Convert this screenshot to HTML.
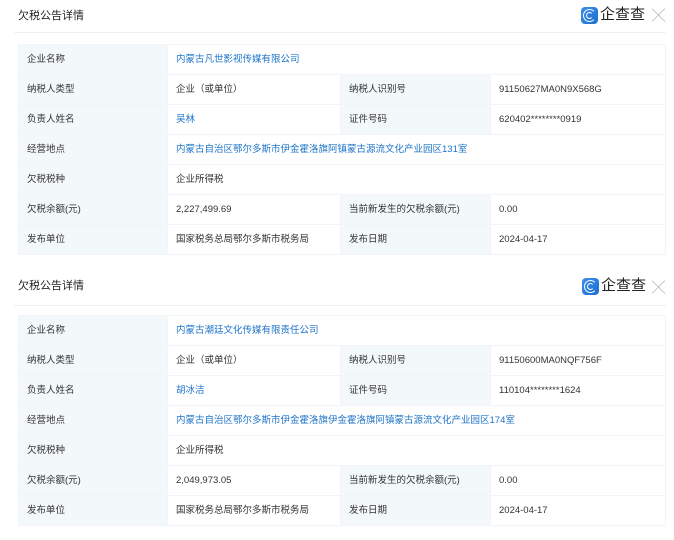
<!DOCTYPE html>
<html><head><meta charset="utf-8"><style>
*{margin:0;padding:0;box-sizing:border-box}
body{width:674px;height:540px;background:#fff;font-family:"Liberation Sans","Noto Sans CJK SC",sans-serif;color:#333;font-size:9.5px;position:relative;overflow:hidden}
.title{position:absolute;left:18px;font-size:11px;color:#222;line-height:14px}
.logo{position:absolute;display:flex;align-items:center}
.ic{width:17px;height:17px;border-radius:4px;background:linear-gradient(135deg,#3a8ee8,#1e6fd0);position:relative;margin-right:2px}
.ic:before{content:"";position:absolute;left:2px;top:2px;width:13px;height:13px;box-sizing:border-box;border:1.5px solid #fff;border-radius:50%;border-right-color:transparent}
.ic:after{content:"";position:absolute;left:5px;top:5px;width:7px;height:7px;box-sizing:border-box;border:1.5px solid #fff;border-radius:50%;border-right-color:transparent}
.lt{font-size:15px;color:#222;line-height:18px}
.x{position:absolute;width:14px;height:14px}
.x:before,.x:after{content:"";position:absolute;left:6px;top:-2px;width:1.2px;height:18px;background:#c4c4c4;transform:rotate(45deg)}
.x:after{transform:rotate(-45deg)}
.line{position:absolute;left:14px;width:652px;height:1px;background:#eef0f2}
table{position:absolute;left:18px;width:647px;border-collapse:collapse;table-layout:fixed}
td{height:30px;line-height:28px;border:1px solid #f3f4f6;padding:1px 8px 0;white-space:nowrap;overflow:hidden;vertical-align:middle}
tr{height:30px}
td.l{background:#f3f8fb;color:#333}
a{color:#1f75c8;text-decoration:none}
</style></head><body>
<div class="title" style="top:9px">欠税公告详情</div>
<div class="logo" style="left:581px;top:6px"><div class="ic"></div><span class="lt">企查查</span></div>
<div class="x" style="left:652px;top:8px"></div>
<div class="line" style="top:32px"></div>
<table style="top:44px">
<colgroup><col style="width:149px"><col style="width:173px"><col style="width:150px"><col style="width:175px"></colgroup>
<tr><td class="l">企业名称</td><td colspan="3"><a>内蒙古凡世影视传媒有限公司</a></td></tr>
<tr><td class="l">纳税人类型</td><td>企业（或单位）</td><td class="l">纳税人识别号</td><td>91150627MA0N9X568G</td></tr>
<tr><td class="l">负责人姓名</td><td><a>吴林</a></td><td class="l">证件号码</td><td>620402********0919</td></tr>
<tr><td class="l">经营地点</td><td colspan="3"><a>内蒙古自治区鄂尔多斯市伊金霍洛旗阿镇蒙古源流文化产业园区131室</a></td></tr>
<tr><td class="l">欠税税种</td><td colspan="3">企业所得税</td></tr>
<tr><td class="l">欠税余额(元)</td><td>2,227,499.69</td><td class="l">当前新发生的欠税余额(元)</td><td>0.00</td></tr>
<tr><td class="l">发布单位</td><td>国家税务总局鄂尔多斯市税务局</td><td class="l">发布日期</td><td>2024-04-17</td></tr>
</table>
<div class="title" style="top:279px">欠税公告详情</div>
<div class="logo" style="left:582px;top:277px"><div class="ic"></div><span class="lt">企查查</span></div>
<div class="x" style="left:652px;top:280px"></div>
<div class="line" style="top:305px"></div>
<table style="top:315px">
<colgroup><col style="width:149px"><col style="width:173px"><col style="width:150px"><col style="width:175px"></colgroup>
<tr><td class="l">企业名称</td><td colspan="3"><a>内蒙古潮廷文化传媒有限责任公司</a></td></tr>
<tr><td class="l">纳税人类型</td><td>企业（或单位）</td><td class="l">纳税人识别号</td><td>91150600MA0NQF756F</td></tr>
<tr><td class="l">负责人姓名</td><td><a>胡冰洁</a></td><td class="l">证件号码</td><td>110104********1624</td></tr>
<tr><td class="l">经营地点</td><td colspan="3"><a>内蒙古自治区鄂尔多斯市伊金霍洛旗伊金霍洛旗阿镇蒙古源流文化产业园区174室</a></td></tr>
<tr><td class="l">欠税税种</td><td colspan="3">企业所得税</td></tr>
<tr><td class="l">欠税余额(元)</td><td>2,049,973.05</td><td class="l">当前新发生的欠税余额(元)</td><td>0.00</td></tr>
<tr><td class="l">发布单位</td><td>国家税务总局鄂尔多斯市税务局</td><td class="l">发布日期</td><td>2024-04-17</td></tr>
</table>
</body></html>
